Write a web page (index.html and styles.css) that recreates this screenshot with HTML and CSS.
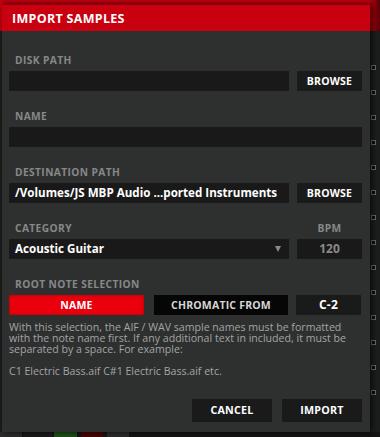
FILE: index.html
```html
<!DOCTYPE html>
<html>
<head>
<meta charset="utf-8">
<link rel="stylesheet" href="styles.css">
</head>
<body>
<div class="app">
  <div class="main">
    <div class="dialog">
      <div class="header">IMPORT SAMPLES</div>
      <div class="content">
        <div class="section">
          <div class="label">DISK PATH</div>
          <div class="row">
            <div class="field wide"></div>
            <div class="btn side">BROWSE</div>
          </div>
        </div>
        <div class="section">
          <div class="label">NAME</div>
          <div class="row">
            <div class="field full"></div>
          </div>
        </div>
        <div class="section">
          <div class="label">DESTINATION PATH</div>
          <div class="row">
            <div class="field wide value">/Volumes/JS MBP Audio ...ported Instruments</div>
            <div class="btn side">BROWSE</div>
          </div>
        </div>
        <div class="section">
          <div class="labelrow">
            <div class="label grow">CATEGORY</div>
            <div class="label bpm">BPM</div>
          </div>
          <div class="row">
            <div class="field wide value select">
              <span>Acoustic Guitar</span>
              <span class="arrow"></span>
            </div>
            <div class="field side num">120</div>
          </div>
        </div>
        <div class="section last">
          <div class="label">ROOT NOTE SELECTION</div>
          <div class="row">
            <div class="btn seg active">NAME</div>
            <div class="btn seg dark">CHROMATIC FROM</div>
            <div class="btn side note">C-2</div>
          </div>
        </div>
        <p class="desc">With this selection, the AIF / WAV sample names must be formatted with the note name first. If any additional text in included, it must be separated by a space. For example:</p>
        <p class="desc example">C1 Electric Bass.aif C#1 Electric Bass.aif etc.</p>
        <div class="actions">
          <div class="btn action">CANCEL</div>
          <div class="btn action">IMPORT</div>
        </div>
      </div>
    </div>
    <div class="rail">
      <span class="sq"></span><span class="sq"></span><span class="sq"></span><span class="sq"></span>
      <span class="sq"></span><span class="sq"></span><span class="sq"></span><span class="sq"></span>
      <span class="sq"></span><span class="sq"></span><span class="sq"></span><span class="sq"></span>
      <span class="sq"></span><span class="sq"></span>
    </div>
  </div>
  <div class="footer">
    <span class="fb gray"></span>
    <span class="fb black"></span>
    <span class="fb green"></span>
    <span class="fb red"></span>
    <span class="fb gray"></span>
  </div>
</div>
</body>
</html>
```

FILE: styles.css
```css
html, body {
  margin: 0;
  padding: 0;
}
body {
  width: 380px;
  height: 437px;
  overflow: hidden;
  background: #1c1d1d;
  font-family: "Open Sans", "Noto Sans", sans-serif;
}
.app {
  width: 380px;
  height: 437px;
  display: flex;
  flex-direction: column;
  background:
    linear-gradient(90deg, #c4000e 0, #c4000e 97%, #5a0006 100%) top left / 100% 31px no-repeat,
    #1c1d1d;
}
.main {
  display: flex;
  height: 432px;
}
.dialog {
  margin: 4px 0 0 2px;
  width: 368px;
  height: 428px;
  background: #2e3030;
  display: flex;
  flex-direction: column;
  box-shadow: 2px 0 6px rgba(0, 0, 0, 0.7);
  position: relative;
  z-index: 1;
}
.header {
  height: 27px;
  background: #c9000f;
  color: #ffffff;
  font-weight: 700;
  font-size: 12.5px;
  letter-spacing: 0.3px;
  line-height: 27px;
  padding-left: 10px;
  border-top: 1px solid #8a0008;
  box-sizing: border-box;
}
.content {
  flex: 1;
  display: flex;
  flex-direction: column;
  padding: 22px 8px 10px 7px;
}
.section {
  margin-bottom: 18px;
}
.section.last {
  margin-bottom: 0;
}
.label {
  height: 14px;
  line-height: 14px;
  font-size: 10.2px;
  font-weight: 700;
  color: #878888;
  padding-left: 6px;
  margin-bottom: 4px;
  letter-spacing: 0.4px;
  white-space: nowrap;
}
.labelrow {
  display: flex;
}
.grow {
  flex: 1;
}
.label.bpm {
  width: 65px;
  padding-left: 0;
  text-align: center;
}
.row {
  display: flex;
  gap: 8px;
  height: 20px;
}
.field {
  background: #191919;
  height: 20px;
  box-sizing: border-box;
}
.wide {
  width: 280px;
}
.full {
  flex: 1;
}
.value {
  color: #ffffff;
  font-weight: 700;
  font-size: 11.6px;
  line-height: 20px;
  padding-left: 6px;
  white-space: nowrap;
  overflow: hidden;
}
.select {
  display: flex;
  justify-content: space-between;
  align-items: center;
  padding-right: 8px;
}
.arrow {
  width: 0;
  height: 0;
  border-left: 3.5px solid transparent;
  border-right: 3.5px solid transparent;
  border-top: 6px solid #8a8a8a;
}
.num {
  width: 65px;
  color: #8a8a8a;
  font-weight: 700;
  font-size: 12px;
  line-height: 20px;
  text-align: center;
}
.btn {
  background: #1a1a1a;
  color: #ffffff;
  font-weight: 700;
  font-size: 10.5px;
  line-height: 20px;
  text-align: center;
  height: 20px;
  box-sizing: border-box;
  letter-spacing: 0.2px;
}
.side {
  width: 65px;
}
.seg {
  width: 135px;
}
.seg.active {
  background: #ea000c;
  box-shadow: inset 0 0 3px #a00008;
}
.seg.dark {
  background: #060606;
  color: #d6d6d6;
  margin-left: 2px;
  width: 134px;
}
.note {
  font-size: 12px;
}
.desc {
  margin: 7px 0 0 0;
  font-size: 10.6px;
  line-height: 11px;
  color: #a3a4a4;
}
.desc.example {
  margin-top: 11px;
}
.actions {
  margin-top: auto;
  display: flex;
  justify-content: flex-end;
  gap: 10px;
}
.action {
  width: 80px;
  height: 23px;
  line-height: 23px;
  font-size: 10.7px;
}
.rail {
  flex: 1;
  display: flex;
  flex-direction: column;
  align-items: flex-start;
  padding: 65px 0 0 1px;
  gap: 20px;
}
.sq {
  display: block;
  width: 5px;
  height: 5px;
  box-sizing: border-box;
  border: 1px solid #6a6a6a;
  background: #0d0d0d;
}
.footer {
  height: 5px;
  display: flex;
  background: #141414;
}
.fb {
  height: 5px;
  display: block;
}
.fb.gray { width: 22px; background: #2b2b2b; margin-right: 2px; }
.fb.black { width: 28px; background: #1a1a1a; margin-right: 2px; }
.fb.green { width: 23px; background: #1d4e16; margin-right: 4px; }
.fb.red { width: 22px; background: #480606; margin-right: 4px; }
```
